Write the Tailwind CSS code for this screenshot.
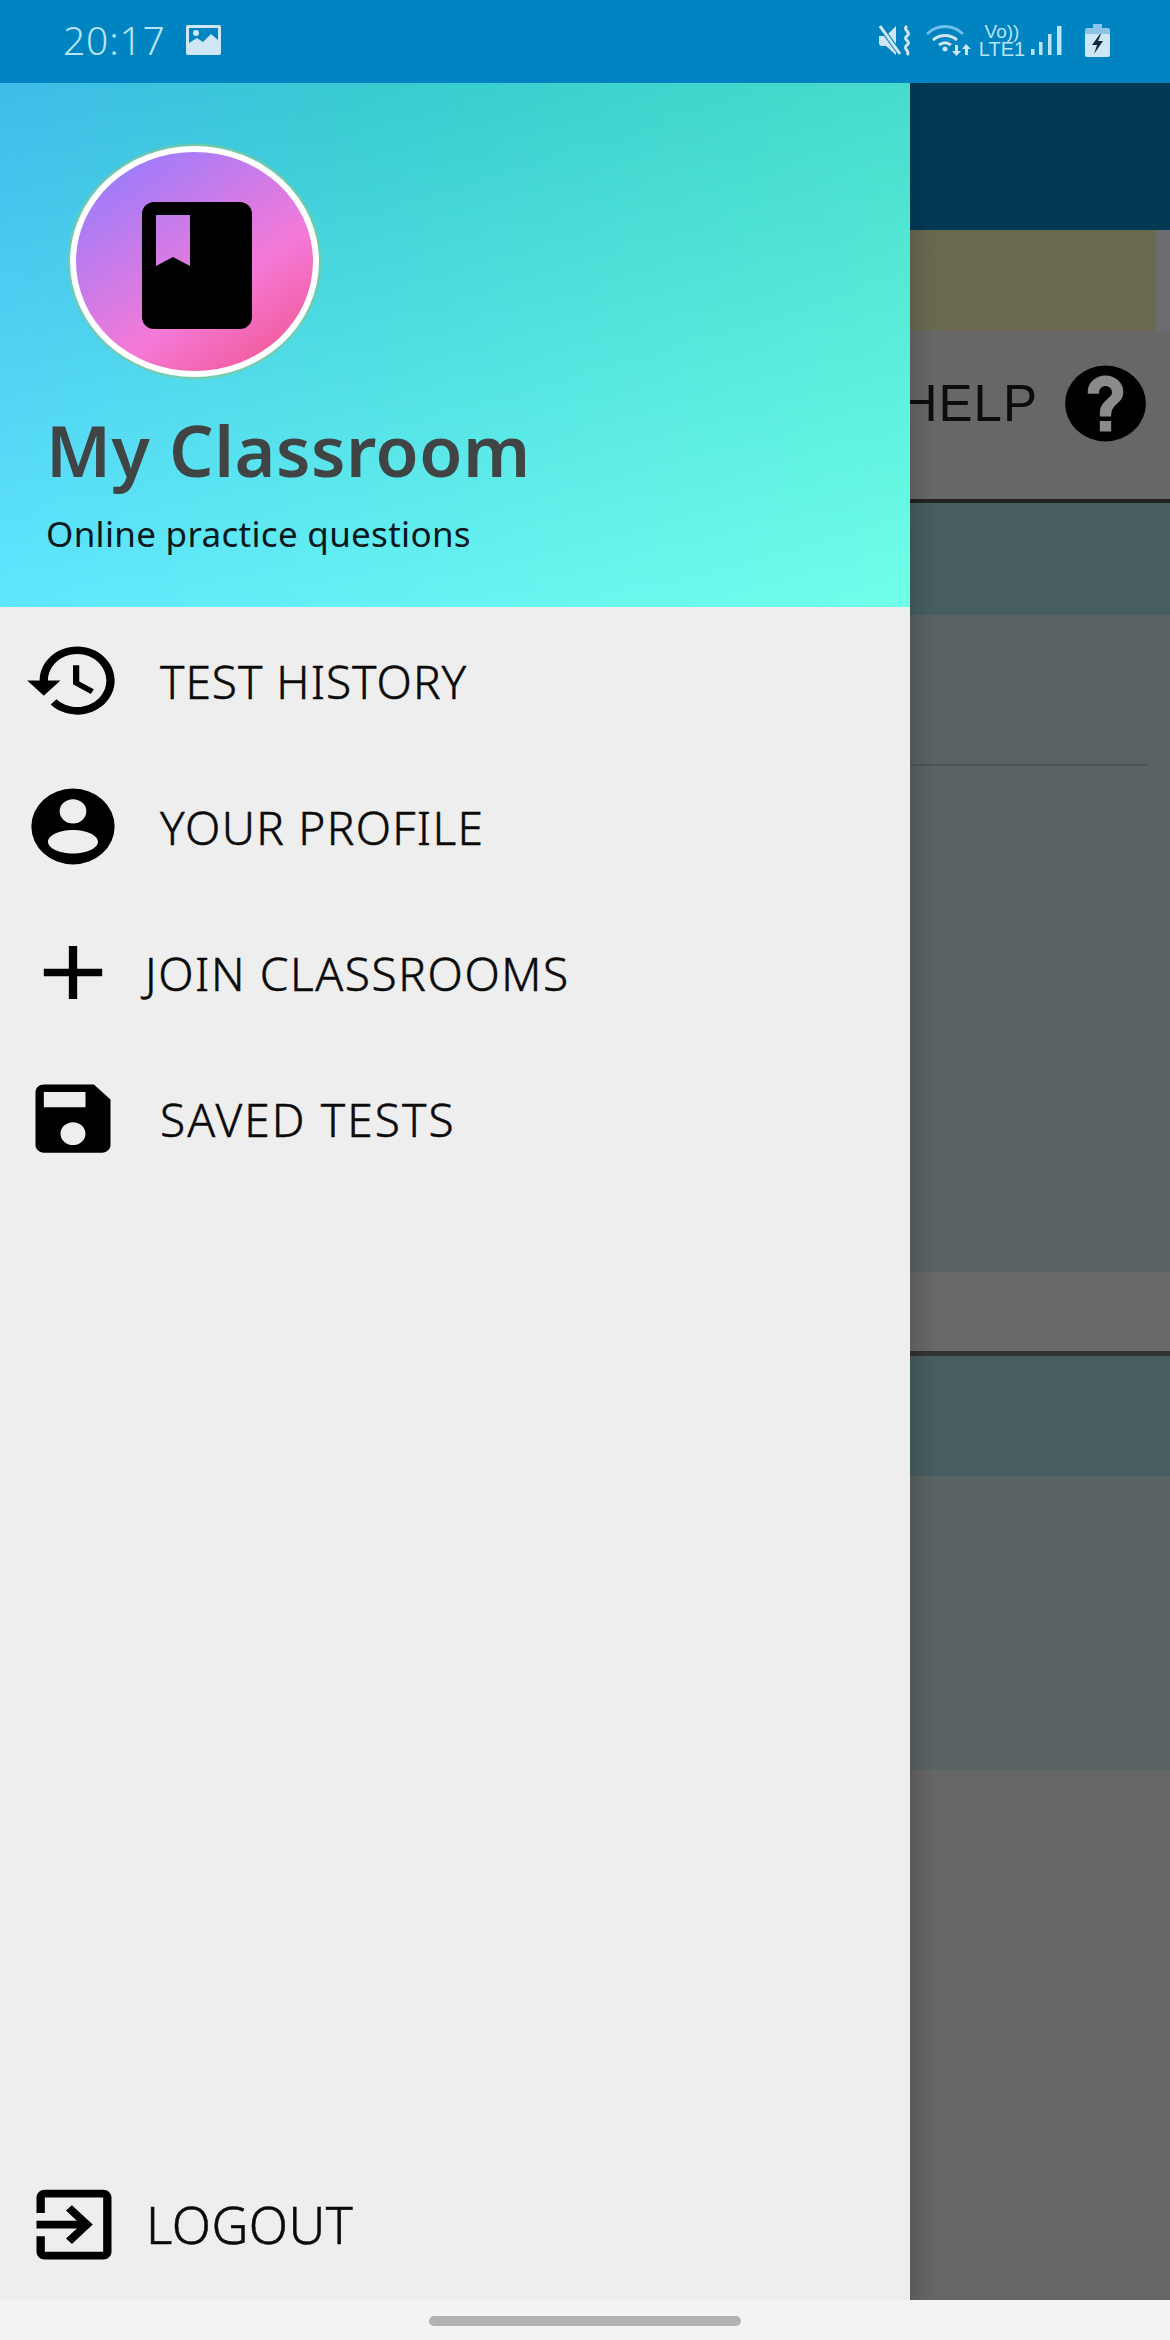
<!DOCTYPE html>
<html lang="en">
<head>
    <meta charset="UTF-8">
    <meta name="viewport" content="width=device-width, initial-scale=1.0">
    <title>My Classroom</title>
    <script src="https://cdn.jsdelivr.net/npm/@tailwindcss/browser@4"></script>
</head>
<body class="font-['Noto_Sans',sans-serif]">
<div class="w-[1170px] h-[2340px] flex flex-col overflow-hidden bg-[#f3f3f3]">

    <!-- status bar -->
    <div class="h-[83px] shrink-0 bg-[#0083c1] flex items-start text-[#b9e3f7]">
        <span class="ml-[63px] mt-[14px] text-[39px] leading-[52px] font-light tracking-[0.8px]">20:17</span>
        <svg class="ml-[20px] mt-[25px] w-[35px] h-[30px]" viewBox="0 0 35 30">
            <path fill-rule="evenodd" fill="#cfe6f5" d="M2 0h31a2 2 0 0 1 2 2v26a2 2 0 0 1-2 2H2a2 2 0 0 1-2-2V2a2 2 0 0 1 2-2zM3 3v15l8-5 6 4 8-8 7 6V3zM10 5a3 3 0 1 1 0 6a3 3 0 0 1 0-6z"/>
        </svg>
        <div class="ml-auto flex items-start">
            <!-- mute vibrate -->
            <svg class="mt-[25px] w-[34px] h-[31px]" viewBox="0 0 34 31">
                <path fill="#cfe6f5" d="M0 11h7L17 1v29L7 21H3a3 3 0 0 1-3-3z"/>
                <path stroke="#0083c1" stroke-width="5" d="M0 0l22 30"/>
                <path stroke="#cfe6f5" stroke-width="3" d="M1 1l20 28"/>
                <path fill="none" stroke="#cfe6f5" stroke-width="3" d="M28 1c-5 4 5 6 0 10s5 5 0 9 4 6 0 10"/>
            </svg>
            <!-- wifi -->
            <svg class="ml-[13px] mt-[25px] w-[46px] h-[31px]" viewBox="0 0 46 31">
                <g fill="none" stroke-width="3">
                    <path stroke="#6fbfe8" d="M1 9C11-1 27-1 37 9"/>
                    <path stroke="#cfe6f5" d="M7 15c7-6 17-6 24 0"/>
                    <path stroke="#cfe6f5" d="M13 20c4-3 8-3 12 0"/>
                </g>
                <circle cx="19" cy="24" r="2.5" fill="#cfe6f5"/>
                <path fill="#cfe6f5" d="M29 20h3v6h3l-4.500 5-4.500-5h3zM40 19l5 5h-3v6h-3v-6h-3z"/>
            </svg>
            <!-- volte -->
            <div class="ml-[8px] mt-[23px] w-[44px] flex flex-col items-center text-[#b9e3f7] font-['Liberation_Sans',sans-serif]">
                <span class="text-[19px] leading-[17px] font-medium">Vo))</span>
                <span class="text-[20px] leading-[18px] font-medium">LTE1</span>
            </div>
            <!-- signal -->
            <svg class="ml-[7px] mt-[26px] w-[31px] h-[30px]" viewBox="0 0 31 30">
                <g fill="#b9e3f7">
                    <rect x="0" y="23" width="3.500" height="6"/>
                    <rect x="8" y="16" width="3.500" height="13"/>
                    <rect x="17" y="8" width="3.500" height="21"/>
                    <rect x="26" y="0" width="4.500" height="29"/>
                </g>
            </svg>
            <!-- battery -->
            <svg class="ml-[23px] mr-[60px] mt-[24px] w-[25px] h-[33px]" viewBox="0 0 25 33">
                <path fill="#8cc5e6" d="M8 0h9v4H8z"/>
                <path fill="#8cc5e6" d="M2 4h21a2 2 0 0 1 2 2v5H0V6a2 2 0 0 1 2-2z"/>
                <path fill="#cfe6f5" d="M0 10h25v21a2 2 0 0 1-2 2H2a2 2 0 0 1-2-2z"/>
                <path fill="#10293f" d="M15 10L7 21h5l-3 9 9-13h-5l3-7z"/>
            </svg>
        </div>
    </div>

    <!-- main -->
    <div class="flex h-[2217px] shrink-0">

        <!-- drawer -->
        <div class="w-[910px] shrink-0 bg-[#eeeeee] flex flex-col">
            <div class="relative h-[524px] shrink-0 bg-[linear-gradient(to_right,#3fbcea,#38cbd0_40%,#46dccb)]">
                <div class="absolute inset-0 bg-[linear-gradient(to_right,#60e6fd,#6cf6ef_65%,#70ffe9)] [mask-image:linear-gradient(to_bottom,transparent,black)]"></div>
                <div class="relative">
                    <div class="ml-[70px] pt-[63px]">
                        <div class="w-[249px] h-[231px] rounded-[50%] border-[6px] border-white shadow-[0_0_2px_2px_#7fc99a] bg-[linear-gradient(145deg,#9a7cfb_10%,#f47ad8_62%,#f25590_95%)] flex items-center justify-center">
                            <svg class="ml-[4px] mt-[8px] w-[110px] h-[127px]" viewBox="0 0 110 127">
                                <path fill-rule="evenodd" d="M12 0h86a12 12 0 0 1 12 12v103a12 12 0 0 1-12 12H12a12 12 0 0 1-12-12V12A12 12 0 0 1 12 0zM14 13v51l17-9 17 9V13z"/>
                            </svg>
                        </div>
                    </div>
                    <h1 class="ml-[46px] mt-[33px] text-[70px] leading-[80px] font-semibold tracking-[0.5px] text-[#404444]">My Classroom</h1>
                    <p class="ml-[46px] mt-[21px] text-[35px] leading-[46px] tracking-[0.3px] text-[#08181c]">Online practice questions</p>
                </div>
            </div>

            <div class="h-[146px] flex items-center pl-[23px] text-[46px] font-light text-[#0a0a0a] [-webkit-text-stroke:0.5px_#0a0a0a]">
                <svg class="w-[100px] h-[91px]" viewBox="0 0 24 24" preserveAspectRatio="none">
                    <path d="M13 3c-4.970 0-9 4.030-9 9H1l3.890 3.890.07.140L9 12H6c0-3.870 3.130-7 7-7s7 3.130 7 7-3.130 7-7 7c-1.930 0-3.680-.790-4.940-2.060l-1.420 1.420C8.270 19.990 10.510 21 13 21c4.970 0 9-4.030 9-9s-4.030-9-9-9zm-1 5v5l4.280 2.540.720-1.210-3.500-2.080V8H12z"/>
                </svg>
                <span class="ml-[37px] mt-[2px] tracking-[1px]">TEST HISTORY</span>
            </div>
            <div class="h-[146px] flex items-center pl-[23px] text-[46px] font-light text-[#0a0a0a] [-webkit-text-stroke:0.5px_#0a0a0a]">
                <svg class="w-[100px] h-[91px]" viewBox="0 0 24 24" preserveAspectRatio="none">
                    <path fill-rule="evenodd" d="M12 2a10 10 0 1 0 0 20a10 10 0 0 0 0-20zM12 4.800a3.200 3.200 0 1 1 0 6.400a3.200 3.200 0 0 1 0-6.400zM12 12.900c3.300 0 6 1.400 6 3.100s-2.700 3.100-6 3.100s-6-1.400-6-3.100s2.700-3.100 6-3.100z"/>
                </svg>
                <span class="ml-[37px] mt-[2px] tracking-[1.300px]">YOUR PROFILE</span>
            </div>
            <div class="h-[146px] flex items-center pl-[23px] text-[46px] font-light text-[#0a0a0a] [-webkit-text-stroke:0.5px_#0a0a0a]">
                <svg class="w-[100px] h-[91px]" viewBox="0 0 24 24" preserveAspectRatio="none">
                    <path d="M19 13h-6v6h-2v-6H5v-2h6V5h2v6h6v2z"/>
                </svg>
                <span class="ml-[22px] mt-[2px] tracking-[1.600px]">JOIN CLASSROOMS</span>
            </div>
            <div class="h-[146px] flex items-center pl-[23px] text-[46px] font-light text-[#0a0a0a] [-webkit-text-stroke:0.5px_#0a0a0a]">
                <svg class="w-[100px] h-[91px]" viewBox="0 0 24 24" preserveAspectRatio="none">
                    <path d="M17 3H5c-1.110 0-2 .900-2 2v14c0 1.100.890 2 2 2h14c1.100 0 2-.900 2-2V7l-4-4zm-5 16c-1.660 0-3-1.340-3-3s1.340-3 3-3 3 1.340 3 3-1.340 3-3 3zm3-10H5V5h10v4z"/>
                </svg>
                <span class="ml-[37px] mt-[2px] tracking-[2.100px]">SAVED TESTS</span>
            </div>

            <div class="mt-auto h-[152px] flex items-center pl-[24px] text-[51px] font-light tracking-[0.5px] text-[#0a0a0a] [-webkit-text-stroke:0.5px_#0a0a0a]">
                <svg class="w-[100px] h-[93px]" viewBox="0 0 24 24" preserveAspectRatio="none">
                    <path d="M10.090 15.590L11.500 17l5-5-5-5-1.410 1.410L12.670 11H3v2h9.670l-2.580 2.590zM19 3H5c-1.110 0-2 .900-2 2v4h2V5h14v14H5v-4H3v4c0 1.100.890 2 2 2h14c1.100 0 2-.900 2-2V5c0-1.100-.900-2-2-2z"/>
                </svg>
                <span class="ml-[22px]">LOGOUT</span>
            </div>
        </div>

        <!-- dimmed screen behind the drawer -->
        <div class="relative flex-1 flex flex-col overflow-hidden bg-[#666666]">
            <div class="h-[147px] shrink-0 bg-[#023a56]"></div>
            <div class="h-[101px] shrink-0 bg-[#6c6c70]">
                <div class="h-full mr-[14px] bg-[#6a6950]"></div>
            </div>
            <div class="h-[168px] shrink-0 bg-[#686767] flex items-start justify-end pt-[27px] pr-[16px] whitespace-nowrap">
                <span class="text-[51px] leading-[91px] font-['Liberation_Sans',sans-serif] text-[#0c0c0c] tracking-[1px]">HELP</span>
                <svg class="ml-[19px] w-[97px] h-[91px] shrink-0" viewBox="0 0 24 24" preserveAspectRatio="none">
                    <circle cx="12" cy="12" r="10"/>
                    <path fill="#8b8b8b" stroke="#8b8b8b" stroke-width=".8" d="M13 19h-2v-2h2v2zm2.070-7.750l-.900.920C13.450 12.900 13 13.500 13 15h-2v-.500c0-1.100.450-2.100 1.170-2.830l1.240-1.260c.370-.360.590-.860.590-1.410 0-1.100-.900-2-2-2s-2 .900-2 2H8c0-2.210 1.790-4 4-4s4 1.790 4 4c0 .880-.360 1.680-.930 2.250z"/>
                </svg>
            </div>
            <div class="h-[4px] shrink-0 bg-[#222222]"></div>
            <div class="h-[112px] shrink-0 bg-[#475e60]"></div>
            <div class="h-[657px] shrink-0 bg-[#5a6364] pt-[149px]">
                <div class="h-[2px] mr-[23px] bg-[#4d5657]"></div>
            </div>
            <div class="h-[79px] shrink-0 bg-[#686868]"></div>
            <div class="h-[5px] shrink-0 bg-[#333333]"></div>
            <div class="h-[120px] shrink-0 bg-[#475e60]"></div>
            <div class="h-[294px] shrink-0 bg-[#5a6364]"></div>
            <!-- drawer shadow -->
            <div class="absolute inset-y-0 left-0 w-[24px] bg-[linear-gradient(to_right,#0000001f,#00000000)]"></div>
        </div>
    </div>

    <!-- nav bar -->
    <div class="flex-1 flex justify-center pt-[16px]">
        <div class="w-[312px] h-[10px] rounded-full bg-[#b2b2b2]"></div>
    </div>
</div>
</body>
</html>
